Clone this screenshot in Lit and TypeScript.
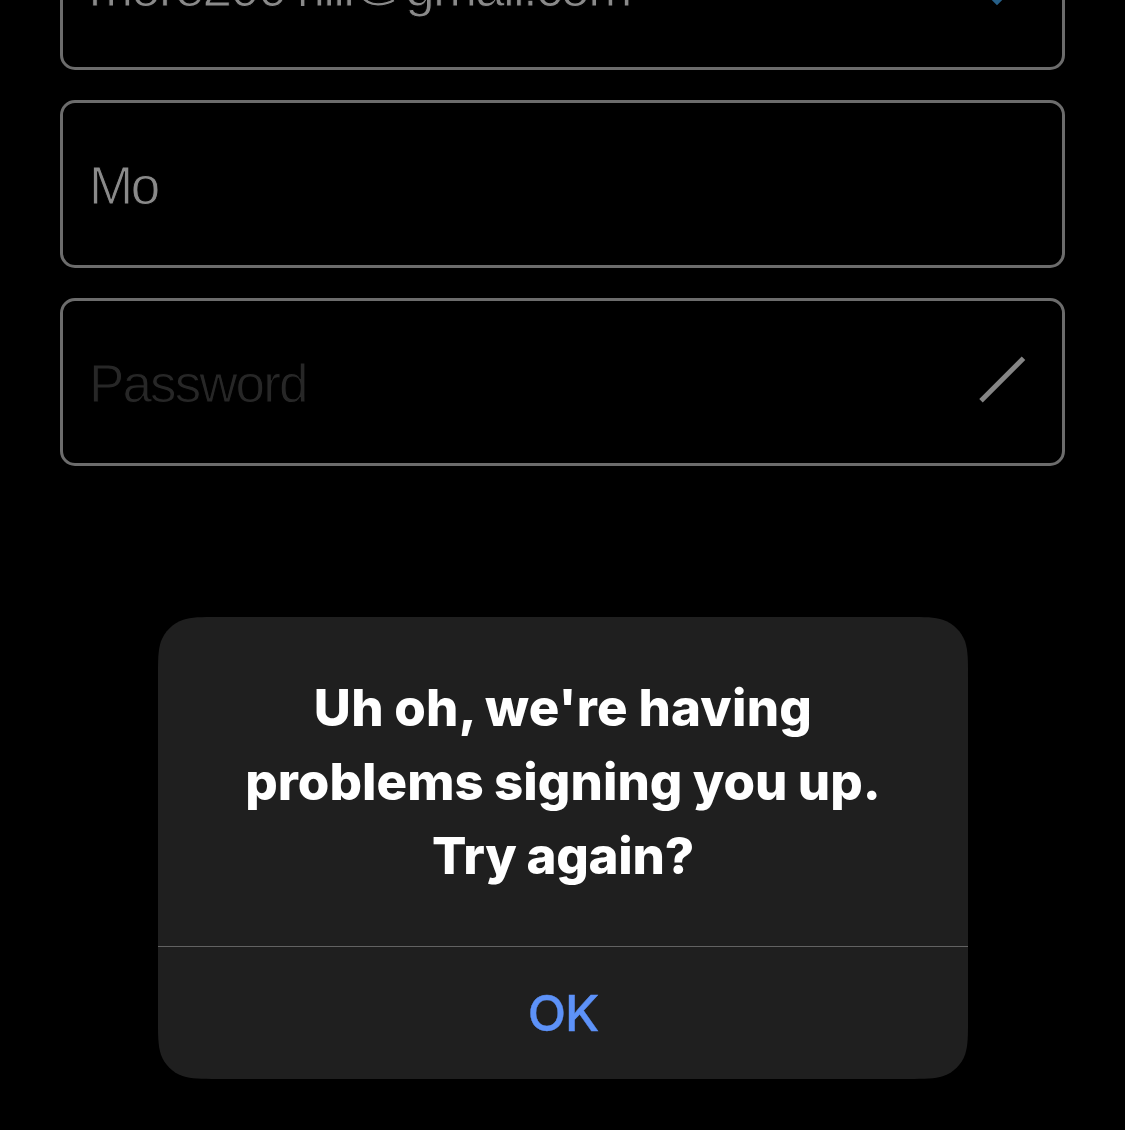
import { LitElement, html, css } from "lit";
import { customElement } from "lit/decorators.js";

@customElement("app-root")
export class AppRoot extends LitElement {
  static styles = css`
    :host { display: block; position: relative; height: 1130px; overflow: hidden; background: #000; font-family: Inter, "Liberation Sans", sans-serif; }
    .form { display: flex; flex-direction: column; gap: 30.2px; padding: 0 60px; margin-top: -98px; }
    .field { box-sizing: border-box; height: 168px; display: flex; align-items: center; justify-content: space-between; padding: 0 37px 0 26px; border: 3px solid #6c6c6c; border-radius: 15px; color: #8a8a8a; font-family: "Liberation Sans", Arial, sans-serif; font-size: 53px; font-weight: 400; white-space: nowrap; -webkit-text-stroke: 1px #000; }
    .value { display: block; line-height: 60px; padding-top: 3px; }
    .email { letter-spacing: -1.8px; }
    .one { font-family: Inter, sans-serif; font-size: 50px; font-weight: 300; letter-spacing: 0; -webkit-text-stroke: 0; display: inline-block; width: 27.8px; line-height: 50px; text-indent: 4px; }
    .at { position: relative; top: -8px; }
    .name { letter-spacing: -2.4px; }
    .placeholder { color: #272727; letter-spacing: -1.9px; }
    .icon { display: block; width: 48px; height: 48px; overflow: visible; }
    .check { margin: 2px 0 0 0; }
    .alert { position: absolute; left: 158px; top: 617px; width: 810px; height: 462px; display: flex; flex-direction: column; color: #fff; text-align: center; }
    .plate { position: absolute; inset: 0; width: 810px; height: 462px; }
    .message { position: relative; box-sizing: border-box; height: 329px; margin: 0; padding-top: 53.5px; font-size: 51px; font-weight: 800; line-height: 74px; word-spacing: -1px; }
    .line { display: block; white-space: nowrap; }
    .l1 { letter-spacing: 0.25px; }
    .l2 { letter-spacing: 0.05px; }
    .l3 { letter-spacing: -0.25px; }
    .ok { position: relative; flex: 1; border: 0; border-top: 1px solid #626262; background: none; padding: 0; color: #5d92f8; font: 500 50px Inter, sans-serif; letter-spacing: -1px; -webkit-text-stroke: 0.4px #5d92f8; }
  `;

  render() {
    return html`
      <div class="form">
        <div class="field">
          <span class="value email">more200<span class="one">1</span>illi<span class="at">@</span>gmail.com</span>
          <svg class="icon check" viewBox="0 0 48 48"><path d="M8 26 L20 38 L40 18" fill="none" stroke="#265f88" stroke-width="6" /></svg>
        </div>
        <div class="field"><span class="value name">Mo</span></div>
        <div class="field">
          <span class="value placeholder">Password</span>
          <svg class="icon" viewBox="0 0 48 48"><path d="M4 42.8 L46.5 0.3" fill="none" stroke="#858585" stroke-width="5" /></svg>
        </div>
      </div>
      <div class="alert" role="alertdialog">
        <svg class="plate" viewBox="0 0 810 462"><path fill="#1f1f1f" d="M60 0H750C767.5 0 776.1 0 785.4 2.9C795.5 6.6 803.4 14.5 807.1 24.6C810 33.9 810 42.5 810 60V402C810 419.5 810 428.1 807.1 437.4C803.4 447.5 795.5 455.4 785.4 459.1C776.1 462 767.5 462 750 462H60C42.5 462 33.9 462 24.6 459.1C14.5 455.4 6.6 447.5 2.9 437.4C0 428.1 0 419.5 0 402V60C0 42.5 0 33.9 2.9 24.6C6.6 14.5 14.5 6.6 24.6 2.9C33.9 0 42.5 0 60 0Z" /></svg>
        <p class="message">
          <span class="line l1">Uh oh, we're having</span>
          <span class="line l2">problems signing you up.</span>
          <span class="line l3">Try again?</span>
        </p>
        <button class="ok">OK</button>
      </div>
    `;
  }
}
